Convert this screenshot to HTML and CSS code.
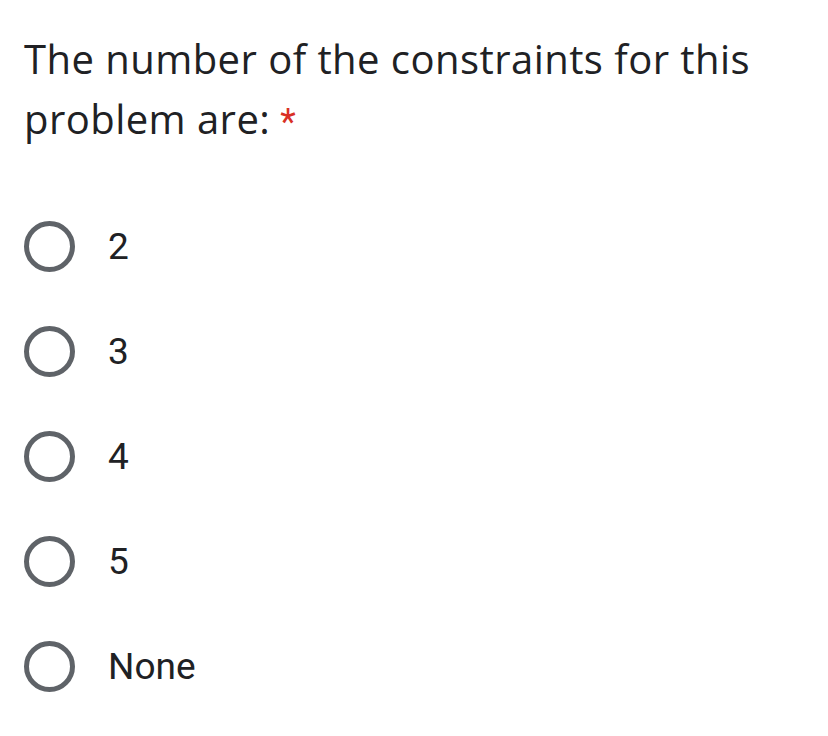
FILE: index.html
```html
<!DOCTYPE html>
<html>
<head>
<meta charset="utf-8">
<link rel="stylesheet" href="styles.css">
</head>
<body>
<div class="question">
  <div class="title">The number of the constraints for this problem are:<span class="req">*</span></div>
  <div class="options">
    <div class="option"><span class="radio"></span><span class="label">2</span></div>
    <div class="option"><span class="radio"></span><span class="label">3</span></div>
    <div class="option"><span class="radio"></span><span class="label">4</span></div>
    <div class="option"><span class="radio"></span><span class="label">5</span></div>
    <div class="option"><span class="radio"></span><span class="label">None</span></div>
  </div>
</div>
</body>
</html>
```

FILE: styles.css
```css
html, body {
  margin: 0;
  padding: 0;
  background: #fff;
}
.question {
  padding: 29px 24px 0 24px;
}
.title {
  font-family: "Open Sans", "Roboto", sans-serif;
  font-size: 40px;
  line-height: 60px;
  letter-spacing: 0.45px;
  color: #202124;
  width: 770px;
}
.req {
  display: inline-block;
  font-family: "Roboto", sans-serif;
  font-size: 36px;
  line-height: 60px;
  letter-spacing: 0;
  color: #d93025;
  margin-left: 10px;
}
.options {
  margin-top: 42px;
  display: flex;
  flex-direction: column;
}
.option {
  display: flex;
  align-items: center;
  height: 105px;
}
.radio {
  width: 41px;
  height: 41px;
  border: 5px solid #5f6368;
  border-radius: 50%;
  flex: none;
}
.label {
  margin-left: 33px;
  font-family: "Roboto", sans-serif;
  font-size: 37px;
  color: #202124;
}
```
